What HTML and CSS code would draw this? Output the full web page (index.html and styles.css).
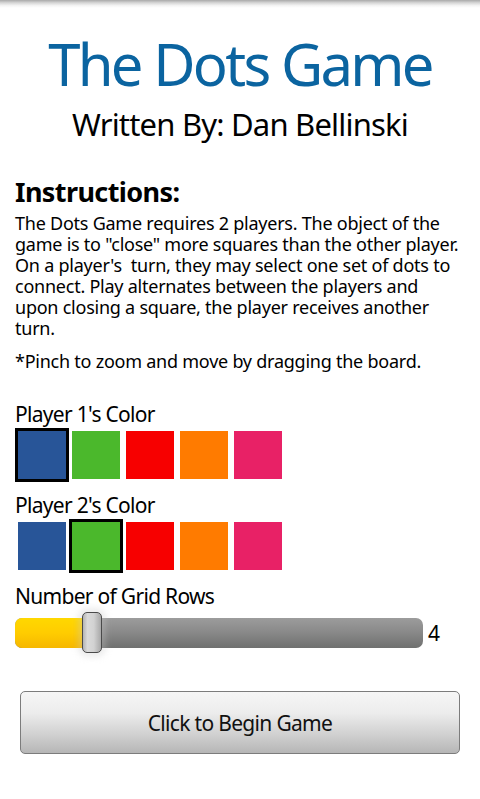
FILE: index.html
```html
<!DOCTYPE html>
<html>
<head>
<meta charset="utf-8">
<link rel="stylesheet" href="styles.css">
</head>
<body>
<div class="screen">
  <div class="topshadow"></div>
  <h1 class="title">The Dots Game</h1>
  <div class="subtitle">Written By: Dan Bellinski</div>
  <h2 class="heading">Instructions:</h2>
  <p class="body">The Dots Game requires 2 players. The object of the game is to "close" more squares than the other player. On a player's&nbsp; turn, they may select one set of dots to connect. Play alternates between the players and<br>upon closing a square, the player receives another turn.</p>
  <p class="body pinch">*Pinch to zoom and move by dragging the board.</p>

  <div class="label first-label">Player 1's Color</div>
  <div class="swatches">
    <div class="cell selected"><div class="sw blue"></div></div>
    <div class="cell"><div class="sw green"></div></div>
    <div class="cell"><div class="sw red"></div></div>
    <div class="cell"><div class="sw orange"></div></div>
    <div class="cell"><div class="sw pink"></div></div>
  </div>

  <div class="label">Player 2's Color</div>
  <div class="swatches">
    <div class="cell"><div class="sw blue"></div></div>
    <div class="cell selected"><div class="sw green"></div></div>
    <div class="cell"><div class="sw red"></div></div>
    <div class="cell"><div class="sw orange"></div></div>
    <div class="cell"><div class="sw pink"></div></div>
  </div>

  <div class="label">Number of Grid Rows</div>
  <div class="slider-row">
    <div class="slider">
      <div class="track">
        <div class="fill" style="width: 76px"></div>
      </div>
      <div class="thumb" style="left: 67px"></div>
    </div>
    <div class="value">4</div>
  </div>

  <div class="btn-wrap">
    <button class="btn">Click to Begin Game</button>
  </div>
</div>
</body>
</html>
```

FILE: styles.css
```css
html, body {
  margin: 0;
  padding: 0;
  background: #fff;
}
body {
  font-family: "Noto Sans", "DejaVu Sans", sans-serif;
  color: #000;
}
.screen {
  width: 480px;
  height: 799px;
  overflow: hidden;
  position: relative;
  padding: 0 15px;
  box-sizing: border-box;
}
.topshadow {
  position: absolute;
  left: 0;
  top: 0;
  width: 480px;
  height: 8px;
  background: linear-gradient(to bottom, #a9a9a9 0%, #d6d6d6 35%, #f4f4f4 70%, rgba(255,255,255,0) 100%);
}
.title {
  margin: 0;
  padding-top: 29px;
  font-size: 58px;
  line-height: 70px;
  font-weight: normal;
  letter-spacing: -2.7px;
  color: #0b64a0;
  text-align: center;
}
.subtitle {
  margin-top: 7px;
  font-size: 31px;
  line-height: 36px;
  letter-spacing: -0.8px;
  text-align: center;
}
.heading {
  margin: 34px 0 0 0;
  font-size: 27px;
  line-height: 32px;
  font-weight: bold;
  letter-spacing: -0.6px;
}
.body {
  margin: 5px 0 0 0;
  font-size: 18px;
  line-height: 21px;
  letter-spacing: -0.24px;
}
.pinch {
  margin-top: 12px;
}
.label {
  margin-top: 11px;
  font-size: 21px;
  line-height: 24px;
  letter-spacing: -0.7px;
}
.first-label {
  margin-top: 30px;
}
.swatches {
  display: flex;
  margin-top: 2px;
}
.cell {
  width: 54px;
  height: 54px;
  padding: 3px;
  box-sizing: border-box;
}
.cell.selected {
  padding: 0;
  border: 3px solid #000;
}
.sw {
  width: 48px;
  height: 48px;
}
.blue { background: #285598; }
.green { background: #4bb82c; }
.red { background: #f70000; }
.orange { background: #ff7b00; }
.pink { background: #e82166; }

.slider-row {
  display: flex;
  align-items: center;
  margin-top: 4px;
  height: 41px;
}
.slider {
  position: relative;
  width: 408px;
  height: 41px;
  display: flex;
  align-items: center;
}
.track {
  width: 408px;
  height: 30px;
  border-radius: 7px;
  background: linear-gradient(to bottom, #9c9c9c 0%, #8a8a8a 45%, #6f706f 100%);
  overflow: hidden;
}
.fill {
  height: 100%;
  background: linear-gradient(to bottom, #ffd800 0%, #ffcc00 50%, #f6b700 100%);
}
.thumb {
  position: absolute;
  top: 0;
  width: 20px;
  height: 41px;
  box-sizing: border-box;
  border: 1.5px solid #4a4a4a;
  border-radius: 5px;
  background: linear-gradient(to right, #b4b4b4 0%, #dadada 25%, #d2d2d2 60%, #a8a8a8 100%);
  box-shadow: 0 0 6px 4px rgba(200,200,200,0.35);
}
.value {
  margin-left: 5px;
  font-size: 21px;
  line-height: 24px;
}
.btn-wrap {
  margin-top: 38px;
  padding-left: 5px;
}
.btn {
  display: block;
  width: 440px;
  height: 63px;
  margin: 0;
  padding: 0;
  border: 1px solid #7c7c7c;
  border-radius: 5px;
  background: linear-gradient(to bottom, #f6f6f6 0%, #ececec 35%, #d0d0d0 70%, #b6b6b6 100%);
  font-family: "Noto Sans", "DejaVu Sans", sans-serif;
  font-size: 21px;
  letter-spacing: -0.68px;
  color: #111;
}
```
